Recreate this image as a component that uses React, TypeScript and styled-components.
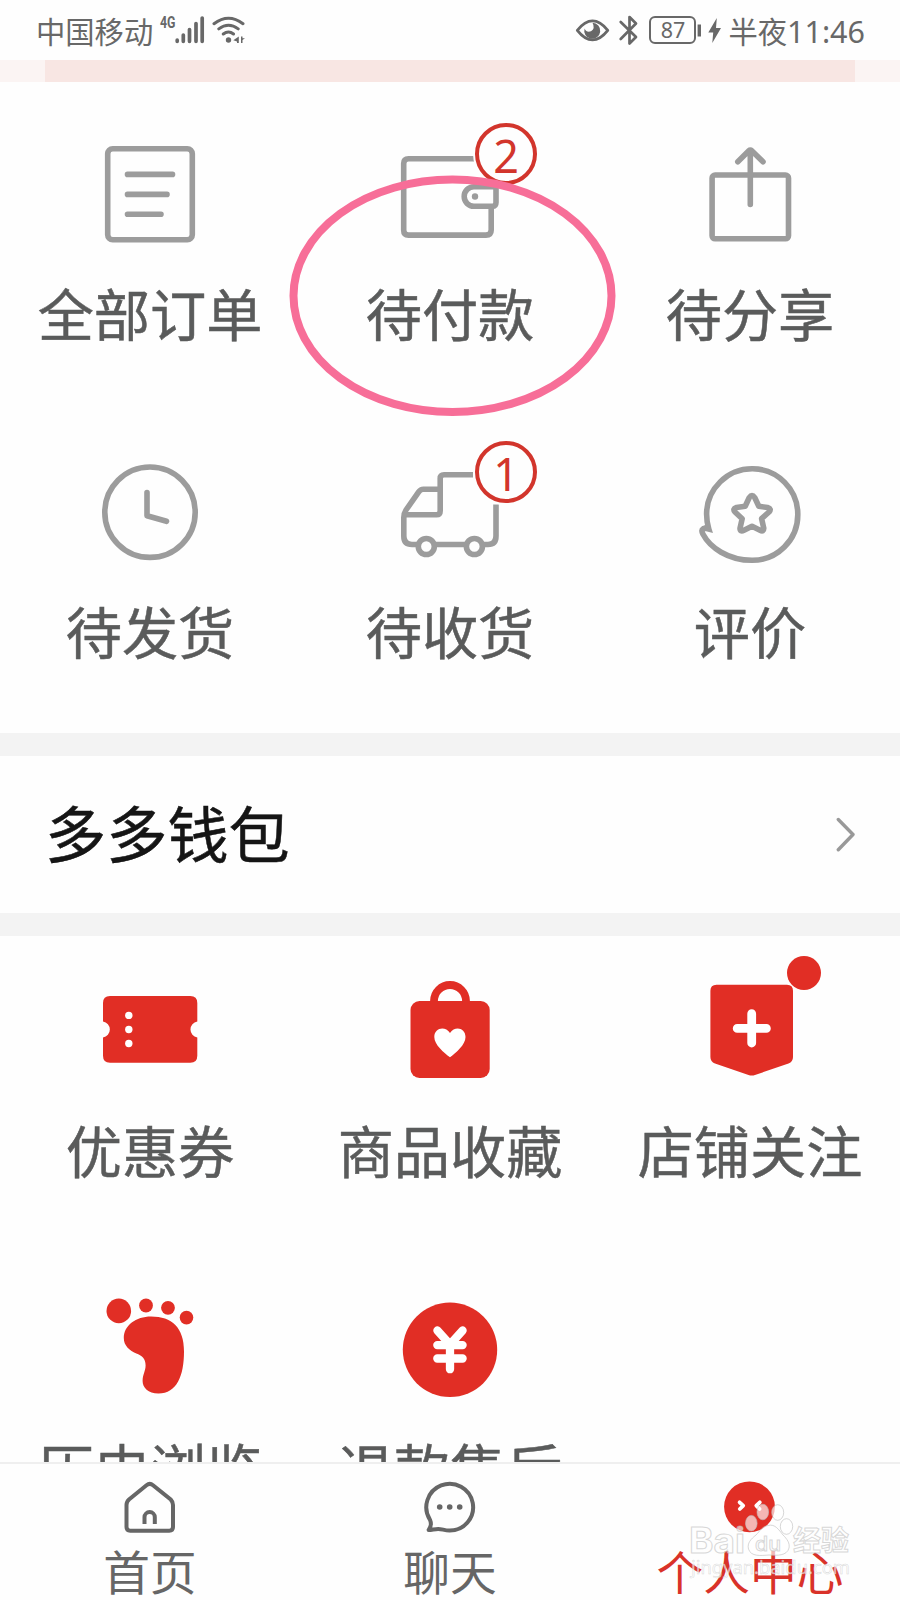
import React from 'react';
import styled, { createGlobalStyle } from 'styled-components';

const GRAY = '#9c9c9c';
const RED = '#e12e25';
const BADGE_RED = '#d2352c';
const STATUS = '#686868';

const GlobalStyle = createGlobalStyle`
  * { box-sizing: border-box; }
  body {
    margin: 0;
    background: #fefefe;
    font-family: 'Noto Sans CJK SC', 'Noto Sans', sans-serif;
  }
`;

const Page = styled.div`
  position: relative;
  display: flex;
  flex-direction: column;
  width: 900px;
  height: 1600px;
  overflow: hidden;
  background: #fefefe;
`;

const StatusBar = styled.header`
  display: flex;
  flex: none;
  align-items: center;
  justify-content: space-between;
  height: 60px;
  padding: 0 35px 0 36px;
  color: ${STATUS};
  font-size: 29.3px;
  line-height: 60px;
`;

const StatusGroup = styled.div`
  display: flex;
  align-items: center;
  gap: 0;
  height: 60px;
`;

const StatusText = styled.span`
  white-space: nowrap;
`;

const Carrier = styled(StatusText)`
  margin-right: 4px;
`;

const Clock = styled.span`
  font-family: 'Noto Sans', sans-serif;
  font-size: 30.5px;
`;

const Battery = styled.span`
  display: flex;
  align-items: center;
  justify-content: center;
  width: 47px;
  height: 28px;
  margin-left: 10px;
  border: 2px solid ${STATUS};
  border-radius: 6px;
  font-family: 'Noto Sans', sans-serif;
  font-size: 21.5px;
  line-height: 24px;
`;

const Banner = styled.div`
  flex: none;
  height: 22px;
  padding: 0 45px;
  background: #fbf4f3;
`;

const BannerCard = styled.div`
  height: 22px;
  background: #f8e6e3;
`;

const Grid = styled.section<{ $top: number; $height: number }>`
  display: grid;
  flex: none;
  grid-template-columns: repeat(3, 300px);
  grid-auto-rows: 317.5px;
  height: ${(p) => p.$height}px;
  padding-top: ${(p) => p.$top}px;
  overflow: hidden;
`;

const Cell = styled.div`
  display: flex;
  flex-direction: column;
  align-items: center;
`;

const IconBox = styled.div`
  position: relative;
  width: 108px;
  height: 108px;
`;

const Icon = styled.svg`
  display: block;
  width: 108px;
  height: 108px;
  overflow: visible;
`;

const Label = styled.div`
  margin-top: 23px;
  color: #5a5b5b;
  font-size: 56.2px;
  line-height: 80px;
  white-space: nowrap;
  -webkit-text-stroke: 0.5px currentColor;
`;

const Badge = styled.span`
  position: absolute;
  left: 79px;
  top: -18px;
  width: 62px;
  height: 62px;
  border: 4px solid ${BADGE_RED};
  border-radius: 50%;
  background: #fefefe;
  box-shadow: 0 0 0 2px #fefefe;
  color: ${BADGE_RED};
  font-family: 'Noto Sans', sans-serif;
  font-size: 45px;
  line-height: 57px;
  text-align: center;
`;

const Dot = styled.span`
  position: absolute;
  left: 91px;
  top: -22px;
  width: 34px;
  height: 34px;
  border-radius: 50%;
  background: ${RED};
`;

const Divider = styled.div`
  flex: none;
  height: 23px;
  background: #f3f3f3;
`;

const WalletRow = styled.section`
  display: flex;
  flex: none;
  align-items: center;
  justify-content: space-between;
  height: 157px;
  padding: 0 45px;
  color: #151515;
  font-size: 61.2px;
  line-height: 90px;
`;

const WalletTitle = styled.span`
  padding-bottom: 5px;
  -webkit-text-stroke: 0.5px currentColor;
`;

const TabBar = styled.nav`
  display: grid;
  flex: none;
  grid-template-columns: repeat(3, 300px);
  height: 138px;
  border-top: 2px solid #efefef;
  background: #fefefe;
`;

const Tab = styled.div<{ $active?: boolean }>`
  display: flex;
  flex-direction: column;
  align-items: center;
  padding-top: 13px;
  color: ${(p) => (p.$active ? '#d93229' : '#666')};
  font-size: 46.7px;
  line-height: 60px;
  white-space: nowrap;
`;

const TabIcon = styled.svg`
  display: block;
  flex: none;
  width: 60px;
  height: 60px;
  margin-bottom: 3px;
`;

const Ring = styled.svg`
  position: absolute;
  left: 289px;
  top: 175px;
  width: 327px;
  height: 242px;
`;

const Watermark = styled.svg`
  position: absolute;
  left: 685px;
  top: 1500px;
  width: 175px;
  height: 90px;
`;

const line = {
  fill: 'none',
  stroke: GRAY,
  strokeWidth: 5.6,
  strokeLinecap: 'round' as const,
  strokeLinejoin: 'round' as const,
};

const OrdersIcon = () => (
  <Icon viewBox="96 141 108 108" {...line}>
    <rect x="107.7" y="148.8" width="84.6" height="91" rx="5" />
    <path d="M127.5 174.4H172.5M127.5 194.4H167M127.5 214.2H161" />
  </Icon>
);

const PayIcon = () => (
  <Icon viewBox="396 141 108 108" {...line} strokeLinecap="butt">
    <path d="M474 158.8H408.5Q403.7 158.8 403.7 163.6V230.3Q403.7 235.1 408.5 235.1H486Q491.2 235.1 491.2 230V207" />
    <path d="M496 184V202.5Q496 206.3 492.5 206.3H474A9.8 9.8 0 0 1 474 186.7H496" />
    <circle cx="475" cy="196.5" r="3.2" fill={GRAY} stroke="none" />
  </Icon>
);

const ShareIcon = () => (
  <Icon viewBox="696 141 108 108" {...line}>
    <rect x="712.1" y="175" width="76.4" height="63.8" rx="3" />
    <path d="M750.3 150.5V204.5M737.8 161.7L748.6 150.9Q750.3 149.5 752 150.9L763 161.7" />
  </Icon>
);

const ClockIcon = () => (
  <Icon viewBox="96 458.5 108 108" {...line}>
    <circle cx="150" cy="511.7" r="45.2" />
    <path d="M147 492V515.3L166.5 520.8" />
  </Icon>
);

const TruckIcon = () => (
  <Icon viewBox="396 458.5 108 108" {...line} strokeLinecap="butt">
    <path d="M473 474.3H444Q440.2 474.3 440.2 478V510.3Q440.2 514.3 436.5 514.3H404.5" />
    <path d="M440 488.7H423.5Q420.5 488.7 418.7 491.3L406 509.5Q403.8 512.8 403.8 517V535.5Q403.8 544 412 544H418.5" />
    <path d="M434 544H466.5M482 544H488Q496 544 496 535.5V504" />
    <circle cx="426.3" cy="546" r="8" />
    <circle cx="474.4" cy="546" r="8" />
  </Icon>
);

const ReviewIcon = () => (
  <Icon viewBox="696 458.5 108 108" {...line} strokeLinecap="butt">
    <path
      strokeLinejoin="miter"
      d="M703.8 527.3L708.8 528.6Q706.6 521.5 706.6 513.5A45.6 45.6 0 0 1 797.8 514.2A45.6 45.6 0 0 1 752 559.8C728 559.8 710 547 703 533.8Q700.8 529.6 703.3 528.2L706 527.6"
    />
    <path d="M749.3 497Q752 493.2 754.7 497L758.8 505.8L767.6 507Q772 508.2 769 511.5L761.6 518.2L763.8 527.8Q763.8 531.7 760 529.8L752 525.7L744 529.8Q740 531.7 740 527.8L742.2 518.2L735 511.5Q732.2 508.2 736.4 507L745.2 505.8Z" />
  </Icon>
);

const CouponIcon = () => (
  <Icon viewBox="96 978 108 108">
    <path
      fill={RED}
      d="M110 996H190.3Q197.3 996 197.3 1003V1021.5A8.1 8.1 0 0 0 197.3 1037.5V1055.7Q197.3 1062.7 190.3 1062.7H110Q103 1062.7 103 1055.7V1037.5A8.1 8.1 0 0 0 103 1021.5V1003Q103 996 110 996Z"
    />
    <g fill="#fff">
      <circle cx="128.8" cy="1015.4" r="3.7" />
      <circle cx="128.8" cy="1029.5" r="3.7" />
      <circle cx="128.8" cy="1043.5" r="3.7" />
    </g>
  </Icon>
);

const BagIcon = () => (
  <Icon viewBox="396 978 108 108">
    <rect x="410.5" y="1001" width="79.2" height="77" rx="9" fill={RED} />
    <path d="M434 1004V1001A16 16 0 0 1 466 1001V1004" fill="none" stroke={RED} strokeWidth="7.8" />
    <path
      fill="#fff"
      d="M450 1057.3C444 1052.5 434.3 1045 434.3 1037C434.3 1028 445 1025.5 450 1033C455 1025.5 465.5 1028 465.5 1037C465.5 1045 456 1052.5 450 1057.3Z"
    />
  </Icon>
);

const ShopIcon = () => (
  <Icon viewBox="696 978 108 108">
    <path
      fill={RED}
      d="M716.5 984.8H787Q793 984.8 793 990.8V1057Q793 1061.8 788.5 1063.6L755 1075Q751.8 1076.2 748.5 1075L715 1063.6Q710.4 1061.8 710.4 1057V990.8Q710.4 984.8 716.5 984.8Z"
    />
    <path d="M751.7 1013.7V1043M737.2 1028.4H766.4" stroke="#fff" strokeWidth="8.8" strokeLinecap="round" />
  </Icon>
);

const FootIcon = () => (
  <Icon viewBox="96 1295.5 108 108" fill={RED}>
    <circle cx="118.8" cy="1310.4" r="12.3" />
    <circle cx="146" cy="1305" r="6.9" />
    <circle cx="168" cy="1307.3" r="6.9" />
    <circle cx="186.5" cy="1317.1" r="6.8" />
    <path d="M151 1316C172 1316 184 1327 184 1351C184 1375 177 1393 158.5 1393C148 1393 142.6 1387 142.6 1380.5C142.6 1374 145.6 1370.5 145.6 1365C145.6 1358 142 1355.5 137 1353.3C129 1349.8 123.8 1345 123.8 1337.5C123.8 1325 136 1316 151 1316Z" />
  </Icon>
);

const RefundIcon = () => (
  <Icon viewBox="396 1295.5 108 108">
    <circle cx="450" cy="1349.3" r="47.2" fill={RED} />
    <path
      d="M437.4 1330L450 1344L462.6 1330M450 1344V1368.7M437.3 1344.6H462.6M437.3 1358H462.6"
      fill="none"
      stroke="#fff"
      strokeWidth="8.3"
      strokeLinecap="round"
    />
  </Icon>
);

const SignalIcons = () => (
  <svg width="92" height="36" viewBox="157 12 92 36" fill={STATUS}>
    <text x="160" y="27.6" fontFamily="Roboto, sans-serif" fontWeight="700" fontSize="16" textLength="15.5" lengthAdjust="spacingAndGlyphs">
      4G
    </text>
    <path
      d="M177.2 40.2V41.3M183.3 35V41.3M189.5 29.5V41.3M196 23.5V41.3M202.2 18V41.3"
      stroke={STATUS}
      strokeWidth="3.7"
      strokeLinecap="round"
    />
    <path
      d="M214 23.7Q228.5 12.7 243 23.7M218.8 28.9Q228.5 21.7 238.2 28.9M223.3 34Q228.5 30 233.5 34"
      fill="none"
      stroke={STATUS}
      strokeWidth="3"
      strokeLinecap="round"
    />
    <circle cx="228.5" cy="40" r="2.7" />
    <path d="M238.8 36.5V43H237V41.4L233.3 40.3ZM241 36.5V43H242.5V40L245 38.2H242.5V36.5Z" />
  </svg>
);

const EyeBluetooth = () => (
  <svg width="64" height="36" viewBox="573 12 64 36">
    <path d="M575.3 30.3Q590.5 11.5 605.8 30.3Q590.5 49.5 575.3 30.3Z" fill="none" stroke={STATUS} strokeWidth="2.8" strokeLinejoin="round" />
    <path d="M590.5 22.8A8 8 0 1 1 582.6 28.5Q584.5 33 589 31.3Q593.5 28.5 590.5 22.8Z" fill={STATUS} />
    <path d="M618.7 22L634 37L627.5 43.5V17L634 23.5L618.7 39" fill="none" stroke={STATUS} strokeWidth="2.7" strokeLinejoin="round" strokeLinecap="round" />
  </svg>
);

const Charging = () => (
  <svg width="32" height="36" viewBox="695 12 32 36">
    <path d="M698.3 24.5V36.5" stroke={STATUS} strokeWidth="3.4" />
    <path d="M715.8 18L707.3 32.5H712.2L711.3 43L720 28H715Z" fill={STATUS} />
  </svg>
);

const HomeIcon = () => (
  <TabIcon viewBox="120 1477 60 60" fill="none" stroke="#666" strokeWidth="4">
    <path d="M126.5 1505Q126.5 1501.8 129 1499.5L146.5 1485.2Q149.8 1482.5 153 1485.2L170.7 1499.5Q173 1501.8 173 1505V1527Q173 1530.7 169.3 1530.7H130.2Q126.5 1530.7 126.5 1527Z" />
    <path d="M144.5 1524V1517.2A5.1 5.1 0 0 1 154.8 1517.2V1524" />
  </TabIcon>
);

const ChatIcon = () => (
  <TabIcon viewBox="420 1477 60 60">
    <path
      d="M428.6 1530Q432.3 1525.5 430 1519.8A23.4 23.4 0 1 1 449.5 1530.6C444.5 1530.6 442 1528.9 438.2 1528.9C434.5 1528.9 432 1530 428.6 1530Z"
      fill="none"
      stroke="#666"
      strokeWidth="4"
      strokeLinejoin="round"
    />
    <g fill="#666">
      <circle cx="439.7" cy="1507" r="2.8" />
      <circle cx="449.7" cy="1507" r="2.8" />
      <circle cx="459.7" cy="1507" r="2.8" />
    </g>
  </TabIcon>
);

const FaceIcon = () => (
  <TabIcon viewBox="720 1477 60 60">
    <circle cx="749.5" cy="1506.8" r="25.4" fill={RED} />
    <path
      d="M739.6 1502.3L743.2 1505.6L739.8 1509M759.8 1502.3L756.3 1505.6L759.6 1509"
      fill="none"
      stroke="#fff"
      strokeWidth="3.8"
      strokeLinecap="round"
      strokeLinejoin="round"
    />
  </TabIcon>
);

type Item = { label: string; icon: React.ReactNode; badge?: number; dot?: boolean };

const orders: Item[] = [
  { label: '全部订单', icon: <OrdersIcon /> },
  { label: '待付款', icon: <PayIcon />, badge: 2 },
  { label: '待分享', icon: <ShareIcon /> },
  { label: '待发货', icon: <ClockIcon /> },
  { label: '待收货', icon: <TruckIcon />, badge: 1 },
  { label: '评价', icon: <ReviewIcon /> },
];

const tools: Item[] = [
  { label: '优惠券', icon: <CouponIcon /> },
  { label: '商品收藏', icon: <BagIcon /> },
  { label: '店铺关注', icon: <ShopIcon />, dot: true },
  { label: '历史浏览', icon: <FootIcon /> },
  { label: '退款售后', icon: <RefundIcon /> },
];

const ItemCell = ({ label, icon, badge, dot }: Item) => (
  <Cell>
    <IconBox>
      {icon}
      {badge !== undefined && <Badge>{badge}</Badge>}
      {dot && <Dot />}
    </IconBox>
    <Label>{label}</Label>
  </Cell>
);

export default function App() {
  return (
    <>
      <GlobalStyle />
      <Page>
        <StatusBar>
          <StatusGroup>
            <Carrier>中国移动</Carrier>
            <SignalIcons />
          </StatusGroup>
          <StatusGroup>
            <EyeBluetooth />
            <Battery>87</Battery>
            <Charging />
            <StatusText>
              半夜<Clock>11:46</Clock>
            </StatusText>
          </StatusGroup>
        </StatusBar>
        <Banner>
          <BannerCard />
        </Banner>
        <Grid $top={59} $height={651}>
          {orders.map((item) => (
            <ItemCell key={item.label} {...item} />
          ))}
        </Grid>
        <Divider />
        <WalletRow>
          <WalletTitle>多多钱包</WalletTitle>
          <svg width="20" height="36" viewBox="835 817 20 36">
            <path d="M838.3 819.5L853 834.5L838.3 849.7" fill="none" stroke="#999" strokeWidth="3.4" strokeLinecap="round" strokeLinejoin="round" />
          </svg>
        </WalletRow>
        <Divider />
        <Grid $top={42} $height={526}>
          {tools.map((item) => (
            <ItemCell key={item.label} {...item} />
          ))}
        </Grid>
        <TabBar>
          <Tab>
            <HomeIcon />
            首页
          </Tab>
          <Tab>
            <ChatIcon />
            聊天
          </Tab>
          <Tab $active>
            <FaceIcon />
            个人中心
          </Tab>
        </TabBar>
        <Ring viewBox="289 175 327 242">
          <ellipse cx="452.5" cy="295.8" rx="159" ry="116.2" fill="none" stroke="#f76e98" strokeWidth="8" />
        </Ring>
        <Watermark viewBox="685 1500 175 90" fill="#fff" fillOpacity="0.65" stroke="#bdbdbd" strokeOpacity="0.6" strokeWidth="1">
          <ellipse cx="751.3" cy="1523.2" rx="5.8" ry="7.8" />
          <ellipse cx="762.8" cy="1512" rx="5.8" ry="7.8" />
          <ellipse cx="777.7" cy="1512.5" rx="6" ry="7.8" />
          <ellipse cx="786.5" cy="1526.5" rx="6.2" ry="7.8" />
          <path d="M768 1525.5C775 1523.5 779 1530 783 1535C787 1539 790 1543 789 1548C787 1556 777 1555.5 769 1555C761 1555.5 751 1557 748.5 1549C747 1543 751 1539 756 1535C760 1531 762 1526.5 768 1525.5Z" />
          <text x="689" y="1553" fontFamily="Inter, sans-serif" fontWeight="700" fontSize="35" textLength="56" lengthAdjust="spacingAndGlyphs">
            Bai
          </text>
          <text x="755" y="1550.5" fontFamily="Inter, sans-serif" fontWeight="500" fontSize="20" textLength="26" lengthAdjust="spacingAndGlyphs">
            du
          </text>
          <text x="793" y="1551" fontWeight="700" fontSize="28" textLength="56" lengthAdjust="spacingAndGlyphs">
            经验
          </text>
          <text x="691" y="1574" fontFamily="'Noto Sans', sans-serif" fontSize="18.5" strokeWidth="0.5" textLength="159" lengthAdjust="spacingAndGlyphs">
            jingyan.baidu.com
          </text>
        </Watermark>
      </Page>
    </>
  );
}
